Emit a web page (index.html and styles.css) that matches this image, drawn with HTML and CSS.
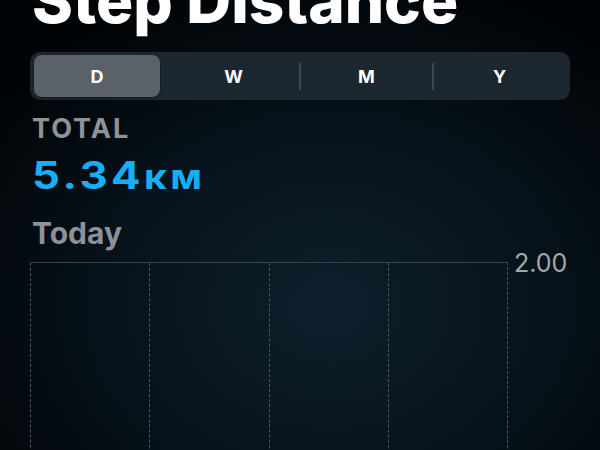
FILE: index.html
```html
<!DOCTYPE html>
<html lang="en">
<head>
    <meta charset="UTF-8">
    <meta name="viewport" content="width=device-width, initial-scale=1.0">
    <title>Step Distance</title>
    <link rel="stylesheet" href="styles.css">
</head>
<body>
    <h1 class="title">Step Distance</h1>

    <div class="segments">
        <div class="segment active">D</div>
        <div class="segment">W</div>
        <div class="segment split">M</div>
        <div class="segment split">Y</div>
    </div>

    <div class="summary">
        <div class="summary-label">TOTAL</div>
        <div class="summary-value"><span class="value-text">5.34<span class="unit">км</span></span></div>
        <div class="summary-range">Today</div>
    </div>

    <div class="chart">
        <div class="chart-grid">
            <div class="col"></div>
            <div class="col"></div>
            <div class="col"></div>
            <div class="col"></div>
        </div>
        <div class="chart-axis">2.00</div>
    </div>
</body>
</html>
```

FILE: styles.css
```css
/* General Styles */
html, body {
    height: 100%;
}

body {
    margin: 0;
    padding: 0 30px;
    overflow: hidden;
    font-family: Inter, "Liberation Sans", sans-serif;
    color: white;
    background: radial-gradient(ellipse 70% 75% at 55% 68%, #0d202c 0%, #07131b 50%, #010407 100%);
}

.title {
    margin: -30px 0 0 2px;
    font-size: 62px;
    line-height: 62px;
    font-weight: 800;
    white-space: nowrap;
}

/* Segmented control */
.segments {
    display: grid;
    grid-template-columns: repeat(4, 1fr);
    margin-top: 20px;
    padding: 3px 4px;
    height: 42px;
    background-color: #1c2730;
    border-radius: 10px;
}

.segment {
    position: relative;
    display: flex;
    align-items: center;
    justify-content: center;
    font-size: 18px;
    font-weight: 700;
    border-radius: 8px;
}

.segment.active {
    margin-right: 7px;
    background-color: #5b6169;
    box-shadow: 0 1px 3px rgba(0, 0, 0, 0.4);
}

.segment.split::before {
    content: "";
    position: absolute;
    left: -1px;
    top: 8px;
    bottom: 7px;
    width: 2px;
    background-color: #3a4853;
}

/* Summary */
.summary {
    margin-top: 14px;
    padding-left: 2px;
}

.summary-label {
    font-size: 27px;
    line-height: 30px;
    font-weight: 700;
    color: #8e939a;
    letter-spacing: 2px;
}

.summary-value {
    margin-top: 6px;
    font-size: 38px;
    line-height: 50px;
    font-weight: 700;
    color: #17aef5;
}

/* SF Rounded is wider than anything installed, so stretch it a bit */
.value-text {
    display: inline-block;
    letter-spacing: 3px;
    transform: scaleX(1.15);
    transform-origin: left center;
}

.unit {
    font-size: 34px;
    letter-spacing: 3px;
}

.summary-range {
    margin-top: 15px;
    font-size: 30px;
    line-height: 32px;
    font-weight: 700;
    color: #8d9299;
}

/* Chart */
.chart {
    display: flex;
    margin-top: 13px;
}

.chart-grid {
    display: grid;
    grid-template-columns: repeat(4, 1fr);
    width: 477px;
    height: 220px;
    border-top: 1px solid #34424c;
    border-right: 1px dashed #475661;
}

.col {
    border-left: 1px dashed #475661;
}

.chart-axis {
    margin: -13px 0 0 6px;
    font-size: 25px;
    line-height: 28px;
    color: #a3a8ae;
}
```
